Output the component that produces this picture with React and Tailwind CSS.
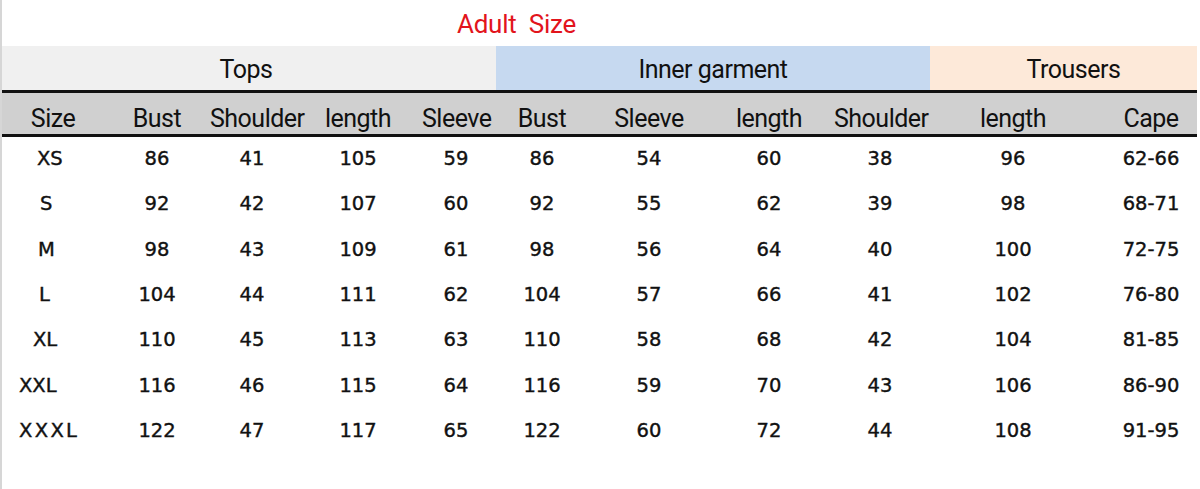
import React from 'react';

const cols = [102, 106, 84, 128, 68, 104, 110, 130, 92, 174, 102];
const grid = { gridTemplateColumns: cols.map(c => `${c}px`).join(' ') };

const headers = ['Size', 'Bust', 'Shoulder', 'length', 'Sleeve', 'Bust', 'Sleeve', 'length', 'Shoulder', 'length', 'Cape'];

// first entry: left padding of the size label (the source image isn't aligned evenly)
const rows = [
    [35, 'XS', '86', '41', '105', '59', '86', '54', '60', '38', '96', '62-66'],
    [38, 'S', '92', '42', '107', '60', '92', '55', '62', '39', '98', '68-71'],
    [36, 'M', '98', '43', '109', '61', '98', '56', '64', '40', '100', '72-75'],
    [37, 'L', '104', '44', '111', '62', '104', '57', '66', '41', '102', '76-80'],
    [31, 'XL', '110', '45', '113', '63', '110', '58', '68', '42', '104', '81-85'],
    [17, 'XXL', '116', '46', '115', '64', '116', '59', '70', '43', '106', '86-90'],
    [17, 'XXXL', '122', '47', '117', '65', '122', '60', '72', '44', '108', '91-95'],
];

const headFont = { fontFamily: 'Roboto, "Open Sans", sans-serif' };
const dataFont = { fontFamily: '"DejaVu Sans", "Liberation Sans", sans-serif' };

const App = () => {
    return (
        <div className='w-[1200px] h-[489px] bg-white border-l-2 border-[#d6d6d6] overflow-hidden'>
            <div className='h-[46px] flex items-center pt-[3px] pl-[455px] text-[#e2141c] text-[26px] tracking-[-0.01em]' style={headFont}>
                Adult&nbsp;&nbsp;Size
            </div>

            <div className='flex h-[44px] text-[25px] text-[#111] tracking-[-0.02em]' style={headFont}>
                <div className='w-[494px] bg-[#f0f0f0] flex items-center justify-center pt-[3px] pr-[6px]'>Tops</div>
                <div className='w-[434px] bg-[#c6d9f0] flex items-center justify-center pt-[3px]'>Inner garment</div>
                <div className='w-[267px] bg-[#fde9d9] flex items-center justify-center pt-[3px] pl-[20px]'>Trousers</div>
            </div>

            <div className='w-[1195px] h-[3px] bg-[#111]'></div>
            <div className='w-[1195px] h-[41px] bg-[#d0d0d0] grid items-center pt-[10px] text-[25px] text-[#111] tracking-[-0.02em]' style={{ ...grid, ...headFont }}>
                {headers.map((h, i) => (
                    <div key={i} className='text-center whitespace-nowrap leading-none'>{h}</div>
                ))}
            </div>
            <div className='w-[1195px] h-[3px] bg-[#111]'></div>

            <div className='-mt-[1px]' style={dataFont}>
                {rows.map(([pad, ...row], r) => (
                    <div key={r} className='grid items-center h-[45.3px] text-[19.5px] text-[#111] [-webkit-text-stroke:0.4px_#111]' style={grid}>
                        {row.map((v, i) => (
                            i === 0
                                ? <div key={i} className={v === 'XXXL' ? 'text-left whitespace-nowrap tracking-[0.12em]' : 'text-left whitespace-nowrap'} style={{ paddingLeft: pad }}>{v}</div>
                                : <div key={i} className='text-center whitespace-nowrap'>{v}</div>
                        ))}
                    </div>
                ))}
            </div>
        </div>
    );
};

export default App;
